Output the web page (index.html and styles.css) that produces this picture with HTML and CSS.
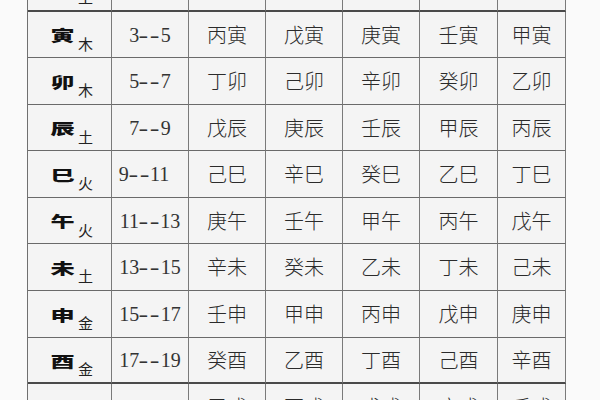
FILE: index.html
```html
<!DOCTYPE html>
<html lang="zh">
<head>
<meta charset="utf-8">
<title>时辰表</title>
<link rel="stylesheet" href="styles.css">
</head>
<body>
<div class="table">
  <div class="c b r0"><span class="br">丑</span><span class="el">土</span></div>
  <div class="c n r0">1<span class="d">--</span>3</div>
  <div class="c g r0">乙丑</div><div class="c g r0">丁丑</div><div class="c g r0">己丑</div><div class="c g r0">辛丑</div><div class="c g r0">癸丑</div>

  <div class="c b"><span class="br">寅</span><span class="el">木</span></div>
  <div class="c n">3<span class="d">--</span>5</div>
  <div class="c g">丙寅</div><div class="c g">戊寅</div><div class="c g">庚寅</div><div class="c g">壬寅</div><div class="c g">甲寅</div>

  <div class="c b"><span class="br">卯</span><span class="el">木</span></div>
  <div class="c n">5<span class="d">--</span>7</div>
  <div class="c g">丁卯</div><div class="c g">己卯</div><div class="c g">辛卯</div><div class="c g">癸卯</div><div class="c g">乙卯</div>

  <div class="c b"><span class="br">辰</span><span class="el">土</span></div>
  <div class="c n">7<span class="d">--</span>9</div>
  <div class="c g">戊辰</div><div class="c g">庚辰</div><div class="c g">壬辰</div><div class="c g">甲辰</div><div class="c g">丙辰</div>

  <div class="c b"><span class="br">巳</span><span class="el">火</span></div>
  <div class="c n shift">9<span class="d">--</span>11</div>
  <div class="c g">己巳</div><div class="c g">辛巳</div><div class="c g">癸巳</div><div class="c g">乙巳</div><div class="c g">丁巳</div>

  <div class="c b"><span class="br">午</span><span class="el">火</span></div>
  <div class="c n">11<span class="d">--</span>13</div>
  <div class="c g">庚午</div><div class="c g">壬午</div><div class="c g">甲午</div><div class="c g">丙午</div><div class="c g">戊午</div>

  <div class="c b"><span class="br">未</span><span class="el">土</span></div>
  <div class="c n">13<span class="d">--</span>15</div>
  <div class="c g">辛未</div><div class="c g">癸未</div><div class="c g">乙未</div><div class="c g">丁未</div><div class="c g">己未</div>

  <div class="c b"><span class="br">申</span><span class="el">金</span></div>
  <div class="c n">15<span class="d">--</span>17</div>
  <div class="c g">壬申</div><div class="c g">甲申</div><div class="c g">丙申</div><div class="c g">戊申</div><div class="c g">庚申</div>

  <div class="c b r8"><span class="br">酉</span><span class="el">金</span></div>
  <div class="c n r8">17<span class="d">--</span>19</div>
  <div class="c g r8">癸酉</div><div class="c g r8">乙酉</div><div class="c g r8">丁酉</div><div class="c g r8">己酉</div><div class="c g r8">辛酉</div>

  <div class="c b"><span class="br">戌</span><span class="el">土</span></div>
  <div class="c n">19<span class="d">--</span>21</div>
  <div class="c g">甲戌</div><div class="c g">丙戌</div><div class="c g">戊戌</div><div class="c g">庚戌</div><div class="c g">壬戌</div>
</div>
</body>
</html>
```
FILE: styles.css
```css
html, body {
  margin: 0;
  padding: 0;
  background: #fafafa;
  overflow: hidden;
}

.table {
  display: grid;
  grid-template-columns: 84px 77px 77px 77px 77px 78px 68px;
  grid-template-rows: 47px 46px 47px 46px 47px 46px 47px 47px 46px 46px;
  width: max-content;
  margin: -35px 0 0 27px;
  border-left: 1px solid #707070;
}

.c {
  box-sizing: border-box;
  background: #f4f4f4;
  border-right: 1px solid #7a7a7a;
  border-bottom: 1px solid #6a6a6a;
  display: flex;
  align-items: center;
  justify-content: center;
  color: #2b2b2b;
}

.r0, .r8 {
  border-bottom: 2px solid #4a4a4a;
}

.g {
  font-family: "Noto Sans CJK SC", sans-serif;
  font-weight: 300;
  font-size: 20px;
  line-height: 1;
}

.n {
  font-family: "Liberation Serif", serif;
  font-size: 20px;
  line-height: 1;
  color: #333;
}

.n .d {
  display: inline-block;
  padding: 0 3px;
  letter-spacing: 1px;
  transform: scaleX(1.45);
}

.shift {
  padding-right: 12px;
}

.b {
  padding-left: 5px;
  font-family: "Noto Sans CJK SC", sans-serif;
  gap: 4px;
}

.br {
  display: inline-block;
  font-size: 23px;
  font-weight: 900;
  line-height: 1;
  color: #111;
  transform: scale(1.05, 0.64);
}

.el {
  display: inline-block;
  font-size: 15px;
  font-weight: 400;
  line-height: 1;
  color: #222;
  margin-top: 17px;
}
```
